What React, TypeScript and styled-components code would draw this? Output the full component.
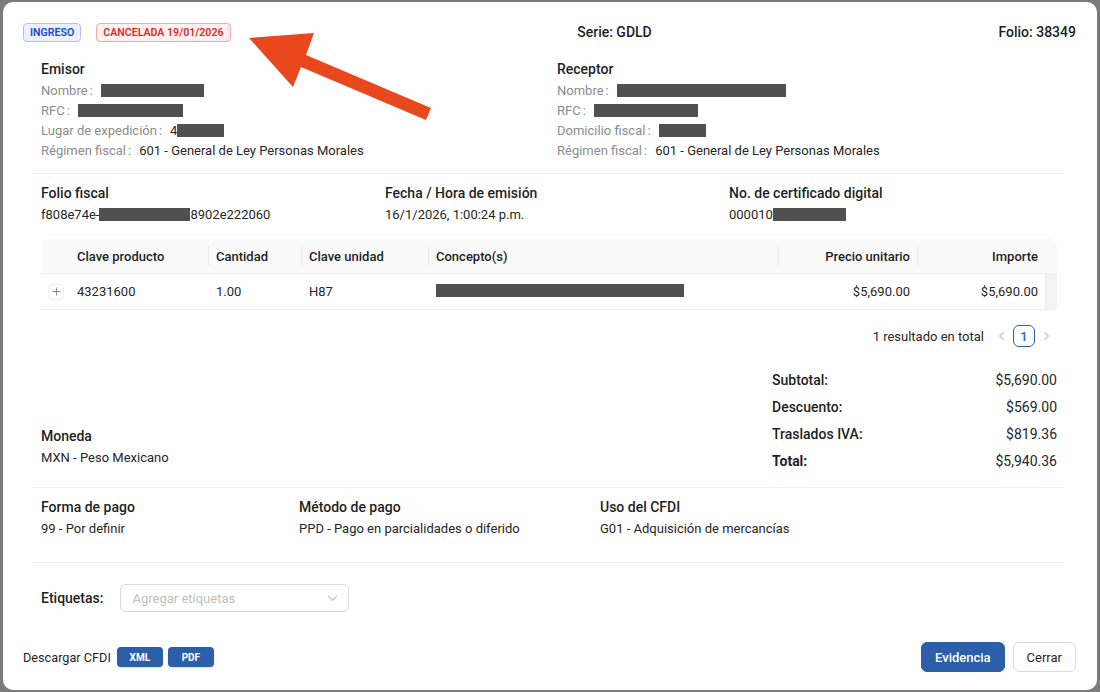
import React from "react";
import styled, { createGlobalStyle } from "styled-components";

const Global = createGlobalStyle`
  html, body { margin: 0; padding: 0; background: #7b7b7b; }
  body { font-family: Roboto, "Noto Sans", Arial, sans-serif; color: #1f1f1f; }
  * { box-sizing: border-box; }
`;

const Modal = styled.div`
  position: relative;
  margin: 2px 3px;
  width: 1094px;
  height: 688px;
  background: #fff;
  border-radius: 10px;
  display: flex;
  flex-direction: column;
  overflow: hidden;
`;

const Header = styled.div`
  display: flex;
  justify-content: space-between;
  align-items: center;
  padding: 21px 21px 0 20px;
  height: 39px;
`;

const Tags = styled.div`
  display: flex;
  gap: 15px;
`;

const Tag = styled.span<{ $tone: "blue" | "red" }>`
  display: inline-flex;
  align-items: center;
  height: 19px;
  padding: 0 6px;
  border-radius: 4px;
  font-size: 10.6px;
  font-weight: 600;
  color: ${(p) => (p.$tone === "blue" ? "#1e47c8" : "#cf2f26")};
  background: ${(p) => (p.$tone === "blue" ? "#e9f1ff" : "#fff0ef")};
  border: 1px solid ${(p) => (p.$tone === "blue" ? "#a9c6f7" : "#f2aaa5")};
`;

const HeadText = styled.span`
  font-size: 14px;
  font-weight: 500;
  color: #1f1f1f;
`;

const Body = styled.div`
  padding: 0 33px 0 29px;
`;

const Section = styled.div<{ $cols: string; $pt: number; $pb: number; $line?: boolean }>`
  display: grid;
  grid-template-columns: ${(p) => p.$cols};
  padding-top: ${(p) => p.$pt}px;
  padding-bottom: ${(p) => p.$pb}px;
  border-bottom: ${(p) => (p.$line === false ? "none" : "1px solid #f0f0f0")};
`;

const Cell = styled.div`
  padding-left: 9px;
`;

const Title = styled.div`
  font-size: 14px;
  font-weight: 500;
  line-height: 24px;
  color: #1f1f1f;
  white-space: nowrap;
`;

const Value = styled.div`
  font-size: 13px;
  line-height: 20px;
  color: #262626;
  white-space: nowrap;
`;

const Item = styled.div`
  font-size: 13px;
  line-height: 20px;
  white-space: nowrap;
  display: flex;
  align-items: center;
`;

const Label = styled.span`
  color: #8c8c8c;
  &::after {
    content: ":";
    margin: 0 8px 0 2px;
  }
`;

const Val = styled.span`
  color: #262626;
  display: inline-flex;
  align-items: center;
`;

const Redact = styled.span<{ $w: number; $dy?: number }>`
  display: inline-block;
  width: ${(p) => p.$w}px;
  height: 13px;
  background: #505050;
  position: relative;
  top: ${(p) => p.$dy ?? -1}px;
`;

const Table = styled.div`
  margin: 14px 0 0 9px;
  width: 1016px;
`;

const COLS = "28px 139px 93px 127px 350px 139px 128px 12px";

const THead = styled.div`
  display: grid;
  grid-template-columns: ${COLS};
  height: 35px;
  background: #fafafa;
  border-radius: 8px 8px 0 0;
  border-bottom: 1px solid #f0f0f0;
`;

const Th = styled.div<{ $right?: boolean; $div?: boolean }>`
  position: relative;
  display: flex;
  align-items: center;
  justify-content: ${(p) => (p.$right ? "flex-end" : "flex-start")};
  padding: 0 7px 0 8px;
  font-size: 13px;
  font-weight: 500;
  color: #1f1f1f;
  &::before {
    content: "";
    display: ${(p) => (p.$div ? "block" : "none")};
    position: absolute;
    left: 0;
    top: 50%;
    transform: translateY(-50%);
    width: 1px;
    height: 20px;
    background: #ececec;
  }
`;

const TRow = styled.div`
  display: grid;
  grid-template-columns: ${COLS};
  height: 36px;
  border-bottom: 1px solid #f0f0f0;
`;

const Td = styled.div<{ $right?: boolean }>`
  display: flex;
  align-items: center;
  justify-content: ${(p) => (p.$right ? "flex-end" : "flex-start")};
  padding: 0 7px 0 8px;
  font-size: 13px;
  color: #262626;
  white-space: nowrap;
`;

const ExpandCell = styled.div`
  display: flex;
  align-items: center;
  justify-content: center;
  padding-left: 2px;
`;

const ExpandBtn = styled.span`
  width: 16px;
  height: 16px;
  border: 1px solid #f0f0f0;
  border-radius: 4px;
  display: flex;
  align-items: center;
  justify-content: center;
  color: #8c8c8c;
`;

const Scroll = styled.div`
  background: #f3f3f3;
  border-left: 1px solid #ebebeb;
`;

const Pager = styled.div`
  display: flex;
  justify-content: flex-end;
  align-items: center;
  margin: 15px 0 0 9px;
  width: 1016px;
  height: 22px;
  padding-right: 1px;
  font-size: 13px;
  color: #262626;
`;

const PagerText = styled.span`
  margin-right: 8px;
`;

const PagerArrow = styled.span`
  width: 20px;
  height: 22px;
  display: flex;
  align-items: center;
  justify-content: center;
  color: #c4c4c4;
`;

const PagerBox = styled.span`
  width: 22px;
  height: 22px;
  border: 1px solid #2d63b0;
  border-radius: 6px;
  display: flex;
  align-items: center;
  justify-content: center;
  color: #2d63b0;
  font-weight: 500;
  margin: 0 1px;
`;

const TotalsSection = styled.div`
  display: flex;
  justify-content: space-between;
  align-items: flex-end;
  margin-top: 20px;
  padding-bottom: 12px;
  border-bottom: 1px solid #f0f0f0;
`;

const MonedaBox = styled.div`
  padding: 0 0 7px 9px;
`;

const Totals = styled.div`
  width: 285px;
  margin-right: 7px;
  display: grid;
  grid-template-columns: 1fr auto;
  font-size: 14px;
  line-height: 27px;
  color: #1f1f1f;
`;

const TLabel = styled.span<{ $bold?: boolean }>`
  font-weight: ${(p) => (p.$bold ? 700 : 500)};
`;

const TValue = styled.span`
  text-align: right;
  color: #262626;
`;

const TagRow = styled.div`
  display: flex;
  align-items: center;
  gap: 17px;
  padding: 21px 0 0 9px;
`;

const Select = styled.div`
  width: 229px;
  height: 28px;
  border: 1px solid #d9d9d9;
  border-radius: 6px;
  display: flex;
  align-items: center;
  justify-content: space-between;
  padding: 0 10px 0 11px;
  font-size: 13px;
  color: #bfbfbf;
`;

const Footer = styled.div`
  margin-top: auto;
  display: flex;
  justify-content: space-between;
  align-items: center;
  padding: 0 21px 18px 20px;
`;

const FooterGroup = styled.div<{ $gap: number }>`
  display: flex;
  align-items: center;
  gap: ${(p) => p.$gap}px;
`;

const FootText = styled.span`
  font-size: 12.7px;
  color: #1f1f1f;
  margin-right: 1px;
`;

const SmallBtn = styled.button`
  width: 46px;
  height: 20px;
  border: none;
  border-radius: 4px;
  background: #2b5fa9;
  color: #fff;
  font-family: inherit;
  font-size: 10px;
  font-weight: 700;
  padding: 0;
  box-shadow: 0 1px 2px rgba(0, 0, 0, 0.15);
`;

const Btn = styled.button<{ $primary?: boolean }>`
  height: 30px;
  padding: 0 13px;
  border-radius: 6px;
  font-family: inherit;
  font-size: 13px;
  font-weight: ${(p) => (p.$primary ? 500 : 400)};
  background: ${(p) => (p.$primary ? "#2b5fa9" : "#fff")};
  color: ${(p) => (p.$primary ? "#fff" : "#1f1f1f")};
  border: 1px solid ${(p) => (p.$primary ? "#2b5fa9" : "#d9d9d9")};
`;

const ArrowLayer = styled.svg`
  position: absolute;
  left: -3px;
  top: -2px;
  width: 1100px;
  height: 692px;
  pointer-events: none;
`;

const Chevron = ({ dir }: { dir: "left" | "right" | "down" }) => {
  const d =
    dir === "left" ? "M7 2 L3 6 L7 10" : dir === "right" ? "M4 2 L8 6 L4 10" : "M1.5 4 L6 8.5 L10.5 4";
  return (
    <svg width="11" height="12" viewBox="0 0 12 12" fill="none">
      <path d={d} stroke="currentColor" strokeWidth="1.2" strokeLinecap="round" strokeLinejoin="round" />
    </svg>
  );
};

export default function App() {
  return (
    <>
      <Global />
      <Modal>
        <Header>
          <Tags>
            <Tag $tone="blue">INGRESO</Tag>
            <Tag $tone="red">CANCELADA 19/01/2026</Tag>
          </Tags>
          <HeadText>Serie: GDLD</HeadText>
          <HeadText>Folio: 38349</HeadText>
        </Header>

        <Body>
          <Section $cols="1fr 1fr" $pt={16} $pb={12}>
            <Cell>
              <Title>Emisor</Title>
              <Item>
                <Label>Nombre</Label>
                <Val><Redact $w={103} /></Val>
              </Item>
              <Item>
                <Label>RFC</Label>
                <Val><Redact $w={105} /></Val>
              </Item>
              <Item>
                <Label>Lugar de expedición</Label>
                <Val>4<Redact $w={47} /></Val>
              </Item>
              <Item>
                <Label>Régimen fiscal</Label>
                <Val>601 - General de Ley Personas Morales</Val>
              </Item>
            </Cell>
            <Cell>
              <Title>Receptor</Title>
              <Item>
                <Label>Nombre</Label>
                <Val><Redact $w={169} /></Val>
              </Item>
              <Item>
                <Label>RFC</Label>
                <Val><Redact $w={104} /></Val>
              </Item>
              <Item>
                <Label>Domicilio fiscal</Label>
                <Val><Redact $w={47} /></Val>
              </Item>
              <Item>
                <Label>Régimen fiscal</Label>
                <Val>601 - General de Ley Personas Morales</Val>
              </Item>
            </Cell>
          </Section>

          <Section $cols="344px 344px 344px" $pt={7} $pb={0} $line={false}>
            <Cell>
              <Title>Folio fiscal</Title>
              <Value>
                <Val>f808e74e-<Redact $w={91} />8902e222060</Val>
              </Value>
            </Cell>
            <Cell>
              <Title>Fecha / Hora de emisión</Title>
              <Value>16/1/2026, 1:00:24 p.m.</Value>
            </Cell>
            <Cell>
              <Title>No. de certificado digital</Title>
              <Value>
                <Val>000010<Redact $w={73} /></Val>
              </Value>
            </Cell>
          </Section>

          <Table>
            <THead>
              <Th />
              <Th>Clave producto</Th>
              <Th $div>Cantidad</Th>
              <Th $div>Clave unidad</Th>
              <Th $div>Concepto(s)</Th>
              <Th $div $right>Precio unitario</Th>
              <Th $div $right>Importe</Th>
              <Th />
            </THead>
            <TRow>
              <ExpandCell>
                <ExpandBtn>
                  <svg width="9" height="9" viewBox="0 0 9 9">
                    <path d="M4.5 0.5 V8.5 M0.5 4.5 H8.5" stroke="currentColor" strokeWidth="1" />
                  </svg>
                </ExpandBtn>
              </ExpandCell>
              <Td>43231600</Td>
              <Td>1.00</Td>
              <Td>H87</Td>
              <Td><Redact $w={248} /></Td>
              <Td $right>$5,690.00</Td>
              <Td $right>$5,690.00</Td>
              <Scroll />
            </TRow>
          </Table>

          <Pager>
            <PagerText>1 resultado en total</PagerText>
            <PagerArrow><Chevron dir="left" /></PagerArrow>
            <PagerBox>1</PagerBox>
            <PagerArrow><Chevron dir="right" /></PagerArrow>
          </Pager>

          <TotalsSection>
            <MonedaBox>
              <Title>Moneda</Title>
              <Value>MXN - Peso Mexicano</Value>
            </MonedaBox>
            <Totals>
              <TLabel>Subtotal:</TLabel>
              <TValue>$5,690.00</TValue>
              <TLabel>Descuento:</TLabel>
              <TValue>$569.00</TValue>
              <TLabel>Traslados IVA:</TLabel>
              <TValue>$819.36</TValue>
              <TLabel $bold>Total:</TLabel>
              <TValue>$5,940.36</TValue>
            </Totals>
          </TotalsSection>

          <Section $cols="258px 301px 1fr" $pt={7} $pb={23}>
            <Cell>
              <Title>Forma de pago</Title>
              <Value>99 - Por definir</Value>
            </Cell>
            <Cell>
              <Title>Método de pago</Title>
              <Value>PPD - Pago en parcialidades o diferido</Value>
            </Cell>
            <Cell>
              <Title>Uso del CFDI</Title>
              <Value>G01 - Adquisición de mercancías</Value>
            </Cell>
          </Section>

          <TagRow>
            <Title>Etiquetas:</Title>
            <Select>
              <span>Agregar etiquetas</span>
              <Chevron dir="down" />
            </Select>
          </TagRow>
        </Body>

        <Footer>
          <FooterGroup $gap={5}>
            <FootText>Descargar CFDI</FootText>
            <SmallBtn>XML</SmallBtn>
            <SmallBtn>PDF</SmallBtn>
          </FooterGroup>
          <FooterGroup $gap={8}>
            <Btn $primary>Evidencia</Btn>
            <Btn>Cerrar</Btn>
          </FooterGroup>
        </Footer>

        <ArrowLayer viewBox="0 0 1100 692">
          <polygon
            points="249,38 314,33 306,55 431,108 426,120 301,67 293,87"
            fill="#e9471d"
          />
        </ArrowLayer>
      </Modal>
    </>
  );
}
